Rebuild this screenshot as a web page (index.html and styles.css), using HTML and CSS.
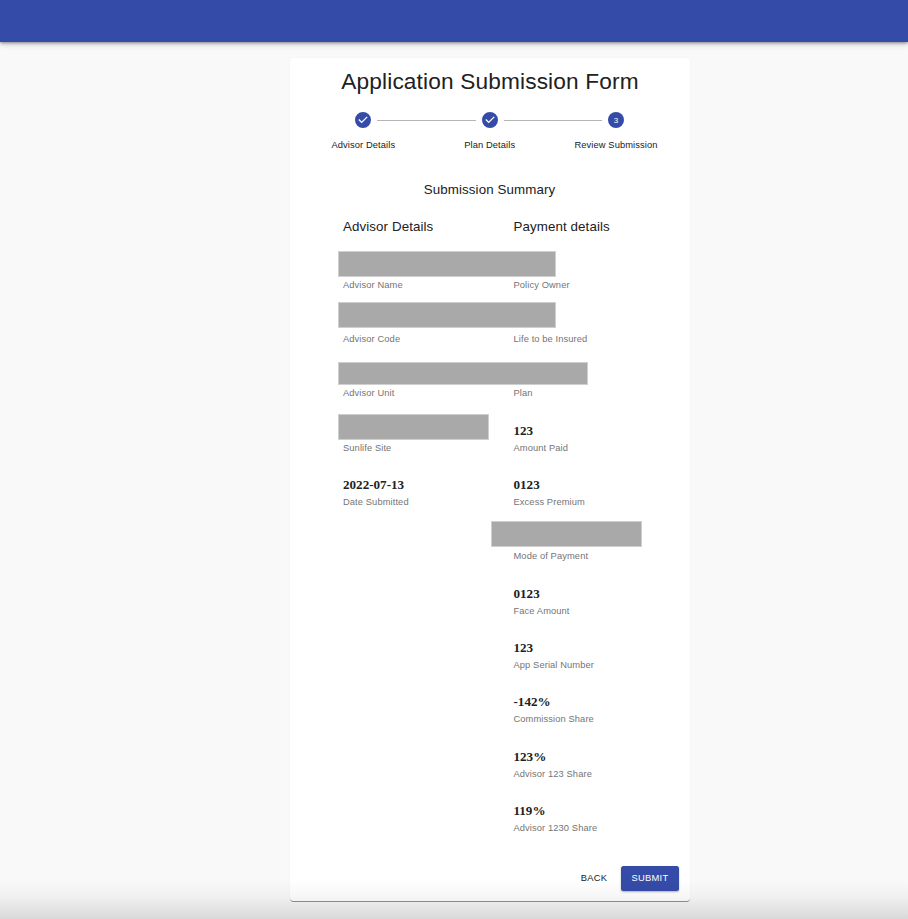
FILE: index.html
```html
<!DOCTYPE html>
<html lang="en">
<head>
<meta charset="utf-8">
<title>Application Submission Form</title>
<link rel="stylesheet" href="styles.css">
</head>
<body>
<header class="app-bar"></header>
<main class="paper">
  <h1 class="title">Application Submission Form</h1>
  <ol class="stepper">
    <li class="step">
      <svg class="step-icon" viewBox="0 0 24 24"><path d="M12 0a12 12 0 1 0 0 24 12 12 0 0 0 0-24zm-2 17l-5-5 1.400-1.400 3.600 3.600 7.600-7.600L19 8l-9 9z"/></svg>
      <span class="step-label">Advisor Details</span>
    </li>
    <li class="step step-linked">
      <svg class="step-icon" viewBox="0 0 24 24"><path d="M12 0a12 12 0 1 0 0 24 12 12 0 0 0 0-24zm-2 17l-5-5 1.400-1.400 3.600 3.600 7.600-7.600L19 8l-9 9z"/></svg>
      <span class="step-label">Plan Details</span>
    </li>
    <li class="step step-linked">
      <span class="step-icon step-number">3</span>
      <span class="step-label">Review Submission</span>
    </li>
  </ol>
  <h2 class="summary-title">Submission Summary</h2>
  <div class="columns">
    <section class="column">
      <h3 class="column-title">Advisor Details</h3>
      <div class="field"><span class="mask mask-name"></span><b class="value"></b><span class="label">Advisor Name</span></div>
      <div class="field"><span class="mask mask-code"></span><b class="value"></b><span class="label">Advisor Code</span></div>
      <div class="field"><span class="mask mask-unit"></span><b class="value"></b><span class="label">Advisor Unit</span></div>
      <div class="field"><span class="mask mask-site"></span><b class="value"></b><span class="label">Sunlife Site</span></div>
      <div class="field"><b class="value">2022-07-13</b><span class="label">Date Submitted</span></div>
    </section>
    <section class="column">
      <h3 class="column-title">Payment details</h3>
      <div class="field"><b class="value"></b><span class="label">Policy Owner</span></div>
      <div class="field"><b class="value"></b><span class="label">Life to be Insured</span></div>
      <div class="field"><b class="value"></b><span class="label">Plan</span></div>
      <div class="field"><b class="value">123</b><span class="label">Amount Paid</span></div>
      <div class="field"><b class="value">0123</b><span class="label">Excess Premium</span></div>
      <div class="field"><span class="mask mask-mode"></span><b class="value"></b><span class="label">Mode of Payment</span></div>
      <div class="field"><b class="value">0123</b><span class="label">Face Amount</span></div>
      <div class="field"><b class="value">123</b><span class="label">App Serial Number</span></div>
      <div class="field"><b class="value">-142%</b><span class="label">Commission Share</span></div>
      <div class="field"><b class="value">123%</b><span class="label">Advisor 123 Share</span></div>
      <div class="field"><b class="value">119%</b><span class="label">Advisor 1230 Share</span></div>
    </section>
  </div>
  <div class="actions">
    <button class="button" type="button">BACK</button>
    <button class="button button-primary" type="button">SUBMIT</button>
  </div>
</main>
<div class="bottom-shade"></div>
</body>
</html>
```
FILE: styles.css
```css
* { box-sizing: border-box; }

body {
  margin: 0;
  height: 919px;
  overflow: hidden;
  background: #f9f9f9;
  color: #212121;
  font-family: "Liberation Sans", Arial, sans-serif;
}

h1, h2, h3, ol { margin: 0; padding: 0; font-weight: 400; }

.app-bar {
  height: 42px;
  background: #354ba8;
  box-shadow: 0 1px 3px rgba(0, 0, 0, .4), 0 3px 6px rgba(0, 0, 0, .12);
}

.paper {
  width: 400px;
  height: 843px;
  margin: 16px 0 0 290px;
  padding-top: 9px;
  background: #fff;
  border-radius: 3px;
  box-shadow: 0 1px 0 -.3px rgba(0, 0, 0, .55), 0 0 2px rgba(0, 0, 0, .05);
}

.title {
  font-size: 22.67px;
  line-height: 28px;
  letter-spacing: .15px;
  text-align: center;
}

.stepper {
  display: flex;
  width: 379px;
  margin: 17px 0 0 10.200px;
  list-style: none;
}

.step {
  position: relative;
  flex: 1;
  display: flex;
  flex-direction: column;
  align-items: center;
}

.step-linked::before {
  content: "";
  position: absolute;
  top: 8px;
  left: calc(-50% + 14px);
  right: calc(50% + 14px);
  height: 1px;
  background: #b5b5b5;
}

.step-icon { width: 16px; height: 16px; fill: #354ba8; }

.step-number {
  border-radius: 50%;
  background: #354ba8;
  color: #fff;
  font-size: 8px;
  line-height: 17px;
  text-align: center;
}

.step-label {
  margin-top: 10px;
  font-size: 9.33px;
  line-height: 14px;
  letter-spacing: .1px;
}

.summary-title {
  margin: 28px 1px 0 0;
  font-size: 13.33px;
  line-height: 20px;
  letter-spacing: .1px;
  text-align: center;
}

.columns {
  display: grid;
  grid-template-columns: 170.500px 170.500px;
  margin: 17px 0 0 53px;
}

.column-title {
  height: 32px;
  font-size: 13.33px;
  line-height: 20px;
  letter-spacing: .1px;
}

.field {
  position: relative;
  height: 54.330px;
  padding-top: 9.600px;
}

.value, .label { display: block; white-space: nowrap; }

.value {
  height: 18.200px;
  font-family: "Liberation Serif", "Times New Roman", serif;
  font-size: 13.100px;
  line-height: 18px;
}

.label {
  color: #757575;
  font-size: 9.33px;
  line-height: 17px;
  letter-spacing: .1px;
}

.mask {
  position: absolute;
  left: -5px;
  border: 1px solid #cfcfcf;
  background: #a9a9a9;
}

.mask-name { top: 2px; width: 218px; height: 26px; }
.mask-code { top: -1px; width: 218px; height: 26px; }
.mask-unit { top: 4px; width: 250px; height: 23px; }
.mask-site { top: 2px; width: 151px; height: 26px; }
.mask-mode { top: .300px; left: -22.500px; width: 151px; height: 26px; }

.actions {
  display: flex;
  justify-content: flex-end;
  gap: 3px;
  margin: 19.700px 11px 0 0;
}

.button {
  width: 48px;
  height: 25px;
  padding: 0;
  border: 0;
  border-radius: 2.500px;
  background: none;
  color: #212121;
  font: 9.33px/25px "Liberation Sans", Arial, sans-serif;
  letter-spacing: .27px;
}

.button-primary {
  width: 58px;
  background: #354ba8;
  color: #fff;
  box-shadow: 0 1px 2px rgba(0, 0, 0, .3);
}

.bottom-shade {
  position: absolute;
  top: 879px;
  left: 0;
  right: 0;
  height: 40px;
  background: linear-gradient(rgba(0, 0, 0, 0), rgba(0, 0, 0, .03) 42%, rgba(0, 0, 0, .13));
  pointer-events: none;
}
```
